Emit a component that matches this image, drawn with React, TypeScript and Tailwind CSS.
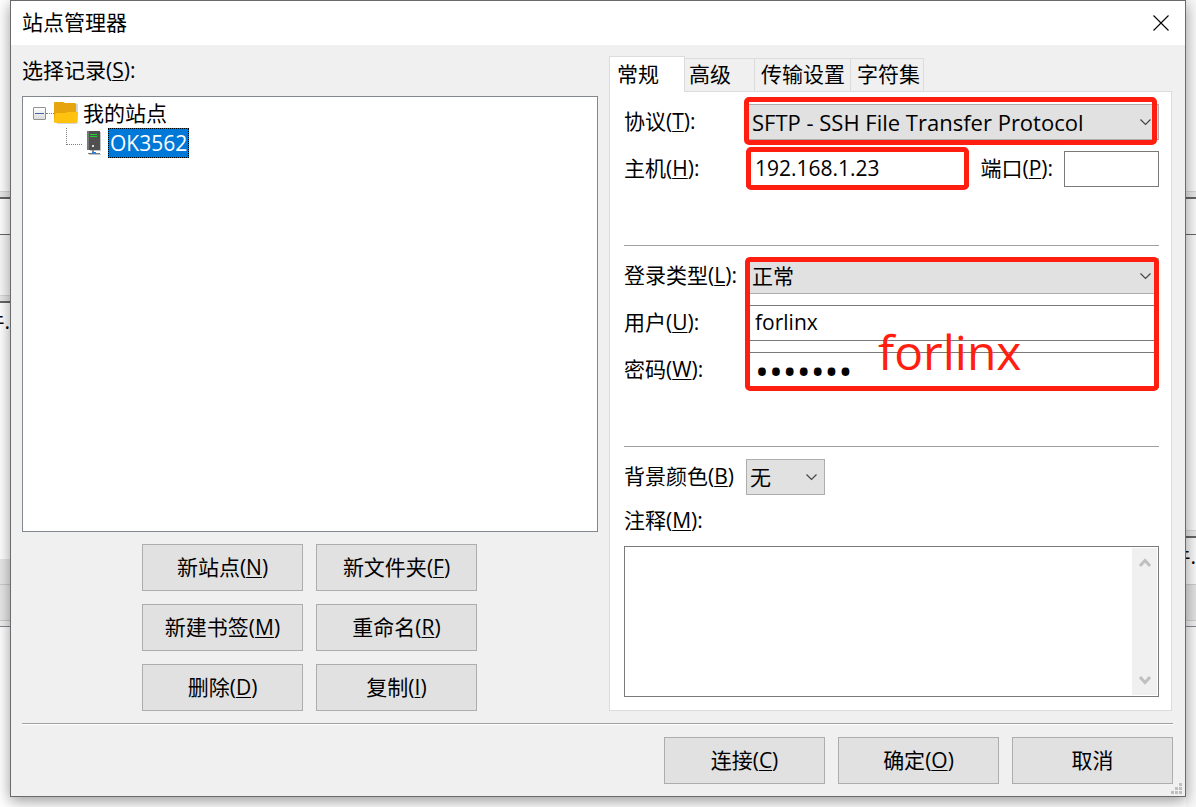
import { useState } from 'react'
import type { ReactNode } from 'react'

const BUTTON =
  'h-[47px] w-[161px] border border-[#adadad] bg-[#e1e1e1] pb-0.5 text-center hover:border-[#0078d7] hover:bg-[#e5f1fb]'
const FIELD = 'h-9 w-full min-w-0 border border-[#7a7a7a] bg-white px-2 outline-none'
const MARK = 'pointer-events-none absolute rounded-[5px] border-[5px] border-[#ff1e10]'

type KeyTextProps = { text: string; hotkey?: string; colon?: boolean }

const KeyText = ({ text, hotkey, colon }: KeyTextProps) => (
  <>
    {text}
    {hotkey && (
      <>
        (<span className="underline decoration-1 underline-offset-2">{hotkey}</span>)
      </>
    )}
    {colon && ':'}
  </>
)

const Row = ({ id, label, children }: { id: string; label: ReactNode; children: ReactNode }) => (
  <div className="flex h-9 items-center">
    <label htmlFor={id} className="w-[122px] shrink-0 pb-0.5 whitespace-nowrap">
      {label}
    </label>
    {children}
  </div>
)

type SelectProps = { id: string; options: string[]; className?: string }

const Select = ({ id, options, className = 'pl-[5px]' }: SelectProps) => (
  <div className="relative w-full">
    <select
      id={id}
      className={`${className} block h-9 w-full appearance-none border border-[#adadad] bg-[#e1e1e1] pr-7 outline-none`}
    >
      {options.map((option) => (
        <option key={option}>{option}</option>
      ))}
    </select>
    <svg
      className="pointer-events-none absolute top-[15px] right-2 h-[7px] w-[11px]"
      viewBox="0 0 11 7"
      fill="none"
      stroke="#444"
      strokeWidth="1.2"
    >
      <path d="M0.5 0.5 5.5 5.5 10.5 0.5" />
    </svg>
  </div>
)

const FolderIcon = () => (
  <svg className="h-[22px] w-[25px]" viewBox="0 0 25 22">
    <path d="M2 2h21a1 1 0 0 1 1 1v17a2 2 0 0 1-2 2H3z" fill="#bbb" opacity=".6" />
    <path d="M0 1a1 1 0 0 1 1-1h8l2 1h10a1 1 0 0 1 1 1v17H0z" fill="#e6a40e" />
    <path d="M1 12 3 11h8l3-1h10l-1 10-1 1H1L0 20z" fill="#ffc20e" />
  </svg>
)

const ServerIcon = () => (
  <svg className="h-[25px] w-[15px]" viewBox="0 0 15 25">
    <path d="M3 1h11v19H3z" fill="#c4c4c4" />
    <path d="M0 0h13v19H0z" fill="#505050" />
    <path d="M0 0h2v19H0z" fill="#777" />
    <path d="M3 3h7v1H3zM3 5h7v1H3z" fill="#1fd32b" />
    <path d="M5 14h2v2H5z" fill="#ddd" />
    <path d="M5 19h2v3H5z" fill="#888" />
    <path d="M2 23h12v1H2z" fill="#c4c4c4" />
    <path d="M1 22h12v1H1z" fill="#777" />
    <path d="M5 21h4v2H5z" fill="#2f7fd6" />
  </svg>
)

const SiteTree = () => (
  <div className="min-h-[200px] flex-1 border border-[#828790] bg-white pt-px">
    <div className="flex h-[30px] items-center pl-[10px]">
      <button
        aria-label="折叠"
        className="flex size-[13px] items-center justify-center rounded-[1px] border border-[#919191] bg-gradient-to-b from-white to-[#dcdcdc]"
      >
        <span className="h-px w-[9px] bg-[#4b63a7]" />
      </button>
      <span className="w-2 border-t border-dotted border-[#808080]" />
      <FolderIcon />
      <span className="ml-1">我的站点</span>
    </div>
    <div className="flex h-[30px] items-center pl-[43px]">
      <span className="h-[17px] w-4 self-start border-b border-l border-dotted border-[#808080]" />
      <span className="ml-[5px]">
        <ServerIcon />
      </span>
      <span className="ml-[6px] border border-dotted border-[#ff8a28] bg-[#0078d7] px-px leading-7 text-white outline-1 -outline-offset-1 outline-dotted outline-black">
        OK3562
      </span>
    </div>
  </div>
)

const siteActions = [
  { text: '新站点', hotkey: 'N' },
  { text: '新文件夹', hotkey: 'F' },
  { text: '新建书签', hotkey: 'M' },
  { text: '重命名', hotkey: 'R' },
  { text: '删除', hotkey: 'D' },
  { text: '复制', hotkey: 'I' },
]

const dialogActions = [{ text: '连接', hotkey: 'C' }, { text: '确定', hotkey: 'O' }, { text: '取消' }]

const tabs = [
  { text: '高级', width: 'w-[70px] pl-1' },
  { text: '传输设置', width: 'w-24 pl-[6px]' },
  { text: '字符集', width: 'w-[73px] pl-[6px]' },
]

const ScrollArrow = ({ up }: { up?: boolean }) => (
  <svg className="h-[9px] w-3" viewBox="0 0 12 9" fill="none" stroke="#c0c0c0" strokeWidth="3">
    <path d={up ? 'M1 8 6 2.5 11 8' : 'M1 1 6 6.5 11 1'} />
  </svg>
)

const GeneralPanel = () => {
  const [host, setHost] = useState('192.168.1.23')
  const [port, setPort] = useState('')
  const [user, setUser] = useState('forlinx')
  const [password, setPassword] = useState('forlinx')

  return (
    <div className="flex flex-1 flex-col border border-t-0 border-[#dcdcdc] bg-white pt-3 pr-3 pb-[13px] pl-[14px]">
      <div className="flex flex-col gap-[11px]">
        <Row id="protocol" label={<KeyText text="协议" hotkey="T" colon />}>
          <div className="relative flex-1">
            <Select
              id="protocol"
              options={['SFTP - SSH File Transfer Protocol']}
              className="pl-[5px] text-[22px]"
            />
            <span className={`${MARK} -top-[7px] right-[2px] -bottom-[5px] -left-[2px]`} />
          </div>
        </Row>
        <Row id="host" label={<KeyText text="主机" hotkey="H" colon />}>
          <div className="relative flex-1">
            <input
              id="host"
              className={`${FIELD} pb-0.5`}
              value={host}
              onChange={(e) => setHost(e.target.value)}
            />
            <span className={`${MARK} -top-1 right-0 -bottom-[3px] left-0`} />
          </div>
          <label htmlFor="port" className="mx-[11px] pb-0.5 whitespace-nowrap">
            <KeyText text="端口" hotkey="P" colon />
          </label>
          <div className="w-[95px]">
            <input
              id="port"
              className={`${FIELD} pb-0.5`}
              value={port}
              onChange={(e) => setPort(e.target.value)}
            />
          </div>
        </Row>
      </div>

      <hr className="mt-[58px] mb-3 border-[#a0a0a0]" />

      <div className="relative flex flex-col gap-[11px]">
        <Row id="logon" label={<KeyText text="登录类型" hotkey="L" colon />}>
          <Select id="logon" options={['正常']} />
        </Row>
        <Row id="user" label={<KeyText text="用户" hotkey="U" colon />}>
          <input
            id="user"
            className={`${FIELD} pb-0.5`}
            value={user}
            onChange={(e) => setUser(e.target.value)}
          />
        </Row>
        <Row id="password" label={<KeyText text="密码" hotkey="W" colon />}>
          <input
            id="password"
            type="password"
            className={`${FIELD} text-[37px]`}
            value={password}
            onChange={(e) => setPassword(e.target.value)}
          />
        </Row>
        <div className={`${MARK} -top-px right-0 -bottom-[3px] left-[121px]`}>
          <span className="absolute top-14 left-32 text-5xl leading-[68px] text-[#ff1e10]">
            forlinx
          </span>
        </div>
      </div>

      <hr className="mt-[58px] mb-3 border-[#a0a0a0]" />

      <Row id="background" label={<KeyText text="背景颜色" hotkey="B" />}>
        <div className="w-[79px]">
          <Select id="background" options={['无']} className="pl-[3px]" />
        </div>
      </Row>
      <label htmlFor="comments" className="mt-[9px] mb-[9px] leading-[33px]">
        <KeyText text="注释" hotkey="M" colon />
      </label>
      <div className="flex min-h-[100px] flex-1 border border-[#7a7a7a] p-px">
        <textarea id="comments" className="flex-1 resize-none px-2 outline-none" />
        <div className="flex w-[25px] flex-col items-center justify-between bg-[#f0f0f0] py-[10px]">
          <ScrollArrow up />
          <ScrollArrow />
        </div>
      </div>
    </div>
  )
}

const SizeGrip = () => (
  <svg className="absolute right-[3px] bottom-[2px] size-[11px]" viewBox="0 0 11 11" fill="#bfbfbf">
    <path d="M8 0h3v3H8zM4 4h3v3H4zM8 4h3v3H8zM0 8h3v3H0zM4 8h3v3H4zM8 8h3v3H8z" />
  </svg>
)

/* Edge of the main window that shows beside the dialog */
const LeftEdge = () => (
  <div className="flex w-[10px] shrink-0 flex-col overflow-hidden bg-white">
    <div className="h-[191px]" />
    <div className="h-[6px] border-t border-[#d5d5d5] bg-[#e8e8e8]" />
    <div className="h-[2px] bg-[#666]" />
    <div className="h-[35px]" />
    <div className="h-px bg-[#666]" />
    <div className="h-[60px] bg-[#f8f8f8]" />
    <div className="h-[6px] border-t border-[#d5d5d5] bg-[#e8e8e8]" />
    <div className="h-[2px] bg-[#666]" />
    <div className="flex h-9 items-center justify-end">件.</div>
    <div className="h-[220px]" />
    <div className="h-[25px] bg-[#e8e8e8]" />
    <div className="h-[37px] border-y border-[#ccc] bg-[#e8e8e8]" />
    <div className="h-[6px] border-b border-[#828790] bg-[#f0f0f0]" />
  </div>
)

const RightEdge = () => (
  <div className="flex w-[10px] shrink-0 flex-col overflow-hidden bg-[#f8f8f8]">
    <div className="h-[191px]" />
    <div className="h-[6px] border-t border-[#d5d5d5] bg-[#e8e8e8]" />
    <div className="h-[2px] bg-[#666]" />
    <div className="h-[35px]" />
    <div className="h-px bg-[#666]" />
    <div className="h-[295px]" />
    <div className="h-[6px] border-t border-[#d5d5d5] bg-[#e8e8e8]" />
    <div className="h-[2px] bg-[#666]" />
    <div className="flex h-[46px] items-center justify-end pb-[10px]">件.</div>
    <div className="h-[37px] border-y border-[#ccc] bg-[#e2e2e2]" />
    <div className="h-[6px] border-b border-[#828790] bg-[#f0f0f0]" />
  </div>
)

export default function App() {
  return (
    <div className="flex min-h-screen bg-white font-['Open_Sans','Noto_Sans_CJK_SC',sans-serif] text-[21px] leading-7 text-black">
      <LeftEdge />
      <main className="relative mb-[10px] flex min-w-0 flex-1 flex-col border border-[#6a6a6a] bg-[#f0f0f0] shadow-[0_4px_14px_rgba(0,0,0,0.4)]">
        <header className="flex h-11 items-center justify-between bg-white pr-4 pl-[11px]">
          <h1 className="pb-0.5">站点管理器</h1>
          <button aria-label="关闭">
            <svg className="size-4" viewBox="0 0 16 16" stroke="#000" strokeWidth="1.1">
              <path d="M0.5 0.5 15.5 15.5M15.5 0.5 0.5 15.5" />
            </svg>
          </button>
        </header>

        <div className="grid flex-1 grid-cols-[576fr_563fr] gap-[11px] pt-[11px] pr-[13px] pl-[11px]">
          <section className="flex flex-col">
            <h2 className="mb-3">
              <KeyText text="选择记录" hotkey="S" colon />
            </h2>
            <SiteTree />
            <div className="mt-3 grid grid-cols-[auto_auto] justify-center gap-[13px] pr-px">
              {siteActions.map(({ text, hotkey }) => (
                <button key={text} className={BUTTON}>
                  <KeyText text={text} hotkey={hotkey} />
                </button>
              ))}
            </div>
          </section>

          <section className="flex flex-col">
            <div role="tablist" className="flex h-9 items-end">
              <button
                role="tab"
                aria-selected="true"
                className="h-9 w-[76px] border border-b-0 border-[#dcdcdc] bg-white pb-0.5 pl-[7px] text-left"
              >
                常规
              </button>
              {tabs.map(({ text, width }) => (
                <button
                  key={text}
                  role="tab"
                  aria-selected="false"
                  className={`${width} h-[34px] border-t border-r border-b border-[#dcdcdc] pb-0.5 text-left whitespace-nowrap`}
                >
                  {text}
                </button>
              ))}
              <span className="flex-1 border-b border-[#dcdcdc]" />
            </div>
            <GeneralPanel />
          </section>
        </div>

        <footer className="mt-3 mr-3 mb-3 ml-[11px] flex justify-end gap-[13px] border-t border-[#a0a0a0] pt-[13px] shadow-[inset_0_1px_0_#fff]">
          {dialogActions.map(({ text, hotkey }) => (
            <button key={text} className={BUTTON}>
              <KeyText text={text} hotkey={hotkey} />
            </button>
          ))}
        </footer>
        <SizeGrip />
      </main>
      <RightEdge />
    </div>
  )
}
